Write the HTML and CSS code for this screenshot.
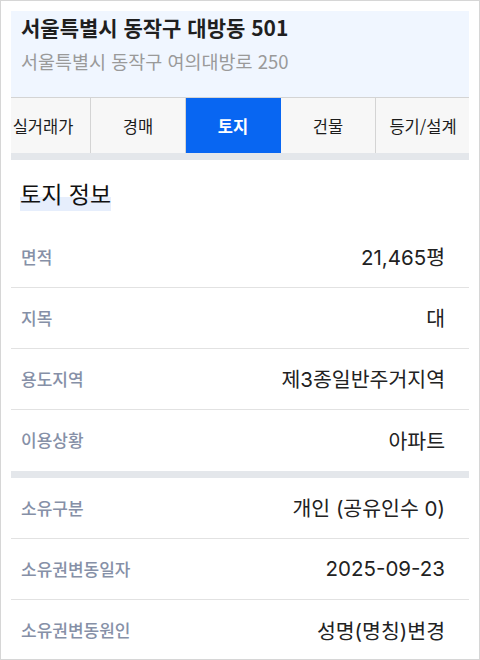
FILE: index.html
```html
<!DOCTYPE html>
<html lang="ko">
<head>
  <meta charset="UTF-8" />
  <meta name="viewport" content="width=device-width, initial-scale=1.0" />
  <title>토지 정보</title>
  <link rel="stylesheet" href="styles.css">
</head>
<body>
  <div class="frame">
    <div class="address">
      <div class="address-title">서울특별시 동작구 대방동 501</div>
      <div class="address-sub">서울특별시 동작구 여의대방로 250</div>
    </div>

    <div class="tabs">
      <div class="tab-track">
        <div class="tab">실거래가</div>
        <div class="tab">경매</div>
        <div class="tab active">토지</div>
        <div class="tab">건물</div>
        <div class="tab">등기/설계</div>
      </div>
    </div>
    <div class="divider"></div>

    <h2 class="section-title"><span>토지 정보</span></h2>

    <div class="rows">
      <div class="row"><span class="label">면적</span><span class="value">21,465평</span></div>
      <div class="row"><span class="label">지목</span><span class="value">대</span></div>
      <div class="row"><span class="label">용도지역</span><span class="value">제3종일반주거지역</span></div>
      <div class="row"><span class="label">이용상황</span><span class="value">아파트</span></div>
    </div>
    <div class="divider"></div>
    <div class="rows">
      <div class="row"><span class="label">소유구분</span><span class="value">개인 (공유인수 0)</span></div>
      <div class="row"><span class="label">소유권변동일자</span><span class="value">2025-09-23</span></div>
      <div class="row"><span class="label">소유권변동원인</span><span class="value">성명(명칭)변경</span></div>
    </div>
  </div>
</body>
</html>
```

FILE: styles.css
```css
* {
  box-sizing: border-box;
}

html, body {
  margin: 0;
  padding: 0;
  background: #fff;
}

body {
  font-family: "Noto Sans CJK KR", "Noto Sans", sans-serif;
  color: #222;
}

.frame {
  height: 660px;
  border: 1px solid #d6d6d6;
  padding: 10px 10px 0;
  overflow: hidden;
}

.address {
  background: #f0f6ff;
  padding: 3px 10px 23px;
}

.address-title {
  font-size: 21px;
  font-weight: 700;
  line-height: 26px;
  color: #1f1f1f;
}

.address-sub {
  margin-top: 8px;
  font-size: 18.5px;
  line-height: 26px;
  color: #9a9a9a;
}

.tabs {
  border-top: 1px solid #d4d4d4;
  background: #f7f7f7;
  overflow: hidden;
}

.tab-track {
  display: flex;
  margin-left: -15px;
}

.tab {
  flex: 0 0 95px;
  height: 55px;
  display: flex;
  align-items: center;
  justify-content: center;
  border-right: 1px solid #d4d4d4;
  font-size: 16.5px;
  white-space: nowrap;
  color: #1c1c1c;
}

.tab.active {
  background: #0866f2;
  border-right-color: #0866f2;
  color: #fff;
  font-weight: 700;
}

.divider {
  height: 7px;
  background: #e4e7eb;
}

.section-title {
  margin: 0;
  height: 67px;
  display: flex;
  align-items: center;
  padding-left: 9px;
  font-size: 23px;
  font-weight: 400;
  color: #111;
}

.section-title span {
  display: inline-block;
  line-height: 28px;
  padding-bottom: 4px;
  margin-top: 3px;
  background: linear-gradient(transparent 56%, #e6eefc 56%);
}

.row {
  height: 61px;
  display: flex;
  align-items: center;
  justify-content: space-between;
  padding: 0 24px 2px 10px;
  border-bottom: 1px solid #e2e2e2;
}

.rows .row:last-child {
  border-bottom: none;
}

.label {
  font-size: 17px;
  font-weight: 500;
  color: #8690a7;
}

.value {
  font-family: "Inter", "Noto Sans CJK KR", sans-serif;
  font-size: 20.5px;
  font-weight: 400;
  color: #222;
}
```
